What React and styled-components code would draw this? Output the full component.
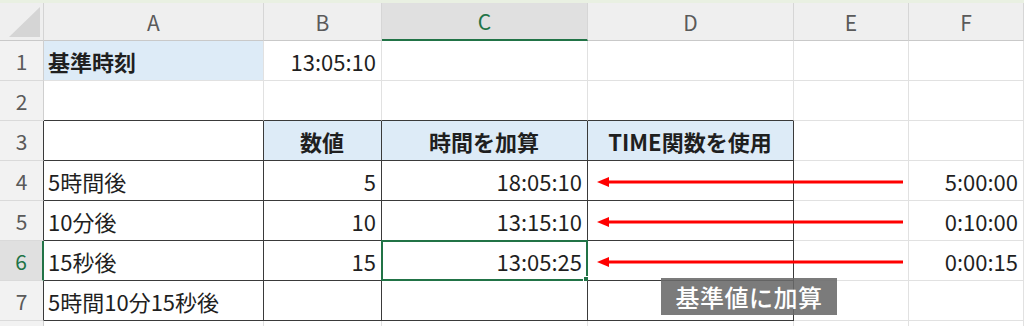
import React from "react";
import styled, { createGlobalStyle, css } from "styled-components";

const GlobalStyle = createGlobalStyle`
  html, body {
    margin: 0;
    padding: 0;
    background: #ffffff;
  }
  body {
    font-family: "Noto Sans CJK JP", "Noto Sans", sans-serif;
  }
`;

const GRID = "#e1e1e1";
const DARK = "#3a3a3a";
const GREEN = "#217346";

const Wrap = styled.div`
  position: relative;
  width: 1024px;
  height: 326px;
  overflow: hidden;
`;

const Sheet = styled.div`
  display: grid;
  grid-template-columns: 44px 220px 118px 206px 206px 115px 115px;
  grid-template-rows: 3px 38px repeat(8, 40px);
`;

const TopStrip = styled.div`
  grid-column: 1 / -1;
  background: #e9f0e2;
`;

const Corner = styled.div`
  position: relative;
  background: #efefef;
  border-right: 1px solid #d4d4d4;
  border-bottom: 1px solid #c9c9c9;
  box-sizing: border-box;
  display: flex;
  align-items: flex-end;
  justify-content: flex-end;
  padding: 0 3px 3px 0;
`;

const ColHead = styled.div`
  box-sizing: border-box;
  display: flex;
  align-items: center;
  justify-content: center;
  font-size: 21px;
  color: #5a5a5a;
  background: #efefef;
  border-right: 1px solid #d6d6d6;
  border-bottom: 1px solid #c9c9c9;
  ${(p) =>
    p.$active &&
    css`
      background: #e0e0e0;
      color: ${GREEN};
      border-bottom: 2px solid ${GREEN};
    `}
`;

const RowHead = styled.div`
  box-sizing: border-box;
  display: flex;
  align-items: center;
  justify-content: center;
  font-size: 21px;
  color: #5a5a5a;
  background: #f2f2f2;
  border-bottom: 1px solid #dadada;
  border-right: 1px solid ${(p) => (p.$edge ? DARK : "#cfcfcf")};
  ${(p) =>
    p.$active &&
    css`
      background: #e0e0e0;
      color: ${GREEN};
      border-right: 2px solid ${GREEN};
    `}
`;

const Cell = styled.div`
  position: relative;
  box-sizing: border-box;
  display: flex;
  align-items: center;
  justify-content: ${(p) =>
    p.$align === "right" ? "flex-end" : p.$align === "center" ? "center" : "flex-start"};
  padding: 0 5px 0 4px;
  font-size: 22px;
  font-weight: ${(p) => (p.$bold ? 700 : 400)};
  color: #1f1f1f;
  white-space: nowrap;
  background: ${(p) => (p.$fill ? "#ddebf7" : "#ffffff")};
  border-right: 1px solid ${(p) => (p.$darkR ? DARK : GRID)};
  border-bottom: 1px solid ${(p) => (p.$darkB ? DARK : GRID)};
  ${(p) =>
    p.$sel &&
    css`
      &::before {
        content: "";
        position: absolute;
        left: -1px;
        top: -1px;
        right: -1px;
        bottom: -1px;
        border: 2px solid ${GREEN};
      }
      &::after {
        content: "";
        position: absolute;
        right: -3px;
        bottom: -3px;
        width: 5px;
        height: 5px;
        background: ${GREEN};
        border: 1px solid #ffffff;
      }
    `}
`;

const Label = styled.div`
  position: absolute;
  left: 661px;
  top: 278px;
  width: 176px;
  height: 37px;
  display: flex;
  align-items: center;
  justify-content: center;
  background: rgba(105, 105, 105, 0.88);
  color: #ffffff;
  font-size: 24px;
  font-weight: 500;
  letter-spacing: 0.5px;
`;

const Arrows = styled.svg`
  position: absolute;
  left: 0;
  top: 0;
  pointer-events: none;
`;

const cols = ["A", "B", "C", "D", "E", "F"];

// each row: [A, B, C, D, E, F] as {t, align, bold, fill}
const rows = [
  [
    { t: "基準時刻", bold: true, fill: true },
    { t: "13:05:10", align: "right" },
    {}, {}, {}, {},
  ],
  [{}, {}, {}, {}, {}, {}],
  [
    {},
    { t: "数値", align: "center", bold: true, fill: true },
    { t: "時間を加算", align: "center", bold: true, fill: true },
    { t: "TIME関数を使用", align: "center", bold: true, fill: true },
    {}, {},
  ],
  [
    { t: "5時間後" },
    { t: "5", align: "right" },
    { t: "18:05:10", align: "right" },
    {}, {},
    { t: "5:00:00", align: "right" },
  ],
  [
    { t: "10分後" },
    { t: "10", align: "right" },
    { t: "13:15:10", align: "right" },
    {}, {},
    { t: "0:10:00", align: "right" },
  ],
  [
    { t: "15秒後" },
    { t: "15", align: "right" },
    { t: "13:05:25", align: "right", sel: true },
    {}, {},
    { t: "0:00:15", align: "right" },
  ],
  [{ t: "5時間10分15秒後" }, {}, {}, {}, {}, {}],
  [{}, {}, {}, {}, {}, {}],
];

const inTable = (r, c) => r >= 3 && r <= 7 && c <= 3;

const App = () => {
  return (
    <>
      <GlobalStyle />
      <Wrap>
        <Sheet>
          <TopStrip />
          <Corner>
            <svg width="31" height="30" viewBox="0 0 31 30">
              <polygon points="31,0 31,30 0,30" fill="#d5d5d5" />
            </svg>
          </Corner>
          {cols.map((c) => (
            <ColHead key={c} $active={c === "C"}>
              {c}
            </ColHead>
          ))}
          {rows.map((row, i) => {
            const r = i + 1;
            return (
              <React.Fragment key={r}>
                {/* row 8 is only a sliver at the bottom edge, its number is out of view */}
                <RowHead $edge={r >= 3 && r <= 7} $active={r === 6}>
                  {r <= 7 ? r : ""}
                </RowHead>
                {row.map((cell, c) => (
                  <Cell
                    key={c}
                    $align={cell.align}
                    $bold={cell.bold}
                    $fill={cell.fill}
                    $sel={cell.sel}
                    $darkR={inTable(r, c)}
                    $darkB={inTable(r, c) || (r === 2 && c <= 3)}
                  >
                    {cell.t}
                  </Cell>
                ))}
              </React.Fragment>
            );
          })}
        </Sheet>
        <Arrows width="1024" height="326" viewBox="0 0 1024 326">
          {[182, 222, 262].map((y) => (
            <g key={y}>
              <line x1="903" y1={y} x2="606" y2={y} stroke="#ff0000" strokeWidth="3" />
              <polygon points={`597,${y} 609,${y - 5} 609,${y + 5}`} fill="#ff0000" />
            </g>
          ))}
        </Arrows>
        <Label>基準値に加算</Label>
      </Wrap>
    </>
  );
};

export default App;
